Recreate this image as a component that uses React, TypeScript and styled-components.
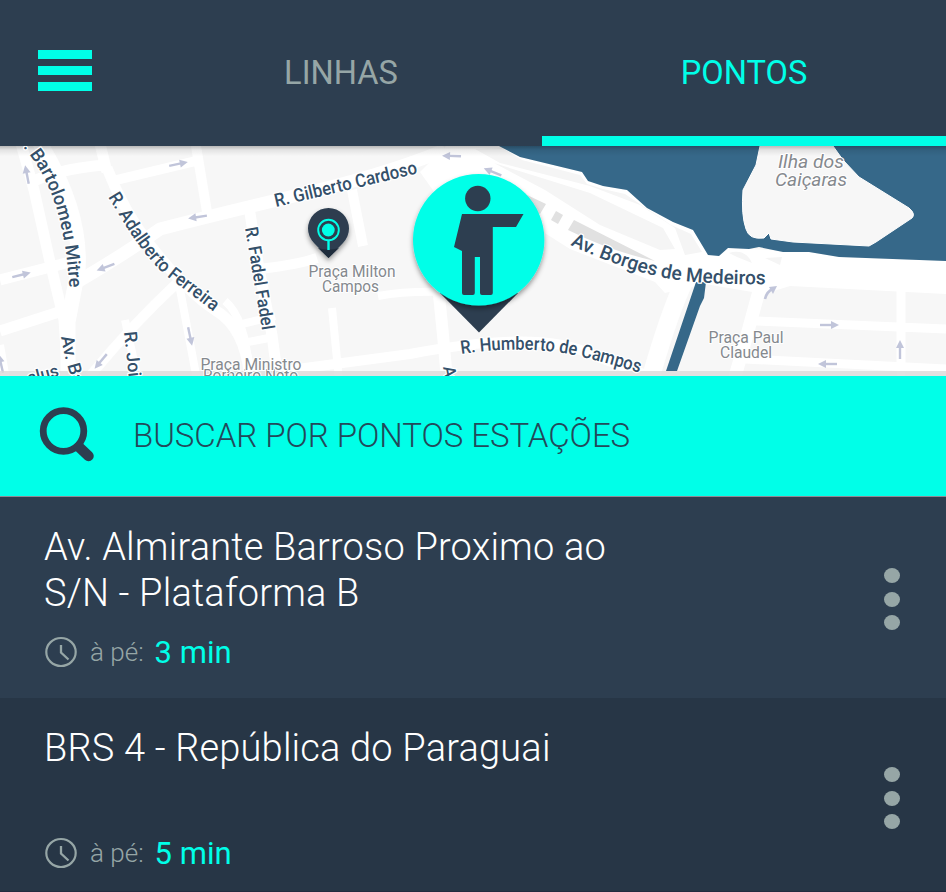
import React from "react";
import styled, { createGlobalStyle } from "styled-components";

const CYAN = "#00ffe8";
const NAVY = "#2d3e50";
const MUTED = "#96a6a6";

const GlobalStyle = createGlobalStyle`
  * { box-sizing: border-box; }
  body { margin: 0; background: ${NAVY}; font-family: Roboto, "Liberation Sans", sans-serif; }
  button { font: inherit; border: 0; padding: 0; background: none; cursor: pointer; }
`;

const Screen = styled.div`
  width: 946px;
  height: 892px;
  overflow: hidden;
  display: flex;
  flex-direction: column;
  background: ${NAVY};
`;

const TopBar = styled.header`
  height: 146px;
  flex: none;
  display: grid;
  grid-template-columns: 140px 402px 404px;
  background: ${NAVY};
`;

const MenuButton = styled.button`
  display: flex;
  flex-direction: column;
  gap: 7px;
  padding: 50px 0 0 38px;
`;

const MenuBar = styled.span`
  width: 54px;
  height: 9px;
  background: ${CYAN};
`;

const Tab = styled.button<{ $active?: boolean }>`
  display: flex;
  align-items: center;
  justify-content: center;
  padding-top: ${(p) => (p.$active ? 10 : 0)}px;
  padding-bottom: ${(p) => (p.$active ? 0 : 1)}px;
  border-bottom: ${(p) => (p.$active ? `10px solid ${CYAN}` : "0")};
  color: ${(p) => (p.$active ? CYAN : MUTED)};
  font-size: 32.6px;
  line-height: 38px;
`;

const MapPanel = styled.section`
  height: 230px;
  flex: none;
  background: #f7f7f7;
`;

const MapDrawing = styled.svg`
  display: block;
  width: 946px;
  height: 230px;
`;

const SearchBar = styled.div`
  height: 121px;
  flex: none;
  display: flex;
  align-items: center;
  padding: 0 0 0 38px;
  gap: 38px;
  background: ${CYAN};
  border-bottom: 1px solid #8c8b94;

  svg {
    margin-bottom: 4px;
  }
`;

const SearchLabel = styled.span`
  color: #23495a;
  font-size: 33px;
  font-weight: 300;
  line-height: 40px;
  letter-spacing: -0.05px;
  white-space: nowrap;
`;

const StopRow = styled.article<{ $dark?: boolean }>`
  height: ${(p) => (p.$dark ? 194 : 201)}px;
  flex: none;
  display: flex;
  justify-content: space-between;
  padding: 26px 46px 0 44px;
  background: ${(p) => (p.$dark ? "#273646" : NAVY)};
  border-bottom: ${(p) => (p.$dark ? "1px solid #232b40" : "0")};
`;

const StopInfo = styled.div`
  width: 600px;
`;

const StopName = styled.h2`
  height: 92px;
  margin: 0;
  padding-top: 1px;
  color: #fff;
  font-size: 38px;
  font-weight: 300;
  line-height: 46px;
  letter-spacing: 0.18px;
  white-space: pre-line;
`;

const WalkTime = styled.div`
  display: flex;
  align-items: center;
  height: 40px;
  margin-top: 17px;
`;

const WalkLabel = styled.span`
  margin: 0 11px 0 13px;
  color: ${MUTED};
  font-size: 26px;
  font-weight: 300;
`;

const Minutes = styled.span`
  color: ${CYAN};
  font-size: 31px;
`;

const MoreButton = styled.button<{ $dark?: boolean }>`
  height: 62px;
  margin-top: ${(p) => (p.$dark ? 43 : 45)}px;
  display: flex;
  flex-direction: column;
  justify-content: space-between;
`;

const Dot = styled.span`
  width: 16px;
  height: 15px;
  border-radius: 50%;
  background: ${MUTED};
`;

const StreetText = styled.text`
  font-family: Roboto, sans-serif;
  font-weight: 500;
  fill: #34506a;
  stroke: #fff;
  stroke-width: 2.5px;
  stroke-linejoin: round;
  paint-order: stroke;
`;

const PlaceText = styled.text<{ $italic?: boolean }>`
  font-family: Roboto, sans-serif;
  font-size: ${(p) => (p.$italic ? 18.5 : 16)}px;
  font-style: ${(p) => (p.$italic ? "italic" : "normal")};
  text-anchor: middle;
  fill: #85898e;
  stroke: #fff;
  stroke-width: 2px;
  stroke-linejoin: round;
  paint-order: stroke;
`;

interface Street { id: string; d: string; label: string; size: number; length?: number }

const streets: Street[] = [
  { id: "mitre", d: "M23,147 C48,174 69,222 70,310", label: ". Bartolomeu Mitre", size: 18.5, length: 151 },
  { id: "ferreira", d: "M108,197 C128,229 148,266 180,286 Q196,298 230,324", label: "R. Adalberto Ferreira", size: 18.5, length: 158 },
  { id: "cardoso", d: "M276,207 Q340,192 440,168", label: "R. Gilberto Cardoso", size: 18.5, length: 146 },
  { id: "fadel", d: "M245,228 L265,348", label: "R. Fadel Fadel", size: 18, length: 104 },
  { id: "borges", d: "M570,245 Q620,268 660,277 T790,284", label: "Av. Borges de Medeiros", size: 19.5, length: 202 },
  { id: "humberto", d: "M461,354 Q530,344 582,357 T660,380", label: "R. Humberto de Campos", size: 18.5, length: 181 },
  { id: "avba", d: "M61,337 Q65,362 78,400", label: "Av. Ba", size: 18 },
  { id: "joi", d: "M124,332 L131,400", label: "R. Join", size: 18 },
];

const roads: Array<[string, number]> = [
  ["M20,140 L34,190 L50,262 L64,320 L68,380", 11],
  ["M38,140 Q82,210 78,270 L68,322 V380", 15],
  ["M32,182 Q55,170 103,165 M99,140 L107,172", 11],
  ["M107,168 Q124,212 150,245 Q185,290 215,310 Q246,328 250,380", 11],
  ["M108,182 L200,160 M195,140 L207,212", 10],
  ["M72,285 Q125,254 160,229 Q218,214 290,197 Q385,175 445,150", 13],
  ["M0,280 L70,262 M0,331 L62,311", 11],
  ["M176,284 Q132,325 90,376", 10],
  ["M179,284 L197,380 M125,320 L138,380 M0,345 L6,380", 8],
  ["M249,207 L258,263 L272,335 L278,380", 11],
  ["M225,301 Q245,318 249,370 M238,325 L275,316 M248,342 L274,337", 8],
  ["M260,269 Q300,264 317,258 M352,190 L363,246", 10],
  ["M332,308 L339,380 M378,296 Q405,291 443,292", 8],
  ["M438,285 L443,335 L447,380", 12],
  ["M260,374 L410,354 Q540,329 590,354 L665,382", 10],
  ["M685,280 Q670,310 650,380", 18],
  ["M762,280 L747,335 L734,380", 13],
  ["M756,321 L946,329 M745,359 L946,369 M901,280 V376", 9],
];

const arrows: Array<[number, number, number]> = [
  [27, 175, -101], [178, 164, -12], [198, 217, 171], [21, 275, -14], [106, 267, 159],
  [190, 336, 78], [101, 361, 130], [1, 364, -103], [452, 156, 182], [493, 172, 202],
  [829, 325, 0], [828, 364, 180], [900, 350, -90],
];

function StreetMap() {
  return (
    <MapDrawing viewBox="0 146 946 230">
      <defs>
        <linearGradient id="topShade" x1="0" y1="0" x2="0" y2="1">
          <stop offset="0" stopColor="#000" stopOpacity="0.26" />
          <stop offset="0.4" stopColor="#000" stopOpacity="0.08" />
          <stop offset="1" stopColor="#000" stopOpacity="0" />
        </linearGradient>
        <filter id="pinShadow" x="-30%" y="-30%" width="160%" height="160%">
          <feDropShadow dx="0" dy="3" stdDeviation="2.5" floodColor="#000" floodOpacity="0.4" />
        </filter>
        {streets.map((s) => <path key={s.id} id={s.id} d={s.d} />)}
      </defs>

      <g fill="none" stroke="#fff" strokeLinejoin="round">
        {roads.map(([d, w]) => <path key={d} d={d} strokeWidth={w} />)}
      </g>

      {/* Lakeside avenue */}
      <path fill="#fff" d="M420,172 L446,146 H503 L520,157 L582,172 L603,186 L627,190 L673,222 L693,230 L708,255 L728,248 L809,252 L839,257 L946,261 V294 L790,286 L764,294 L705,284 L665,293 L655,282 L570,249 L540,230 L500,200 H440Z" />
      <path fill="#f5f5f5" d="M475,149 L502,148 L522,160 L580,175 L587,184 L603,189 L625,194 L671,225 L691,234 L702,252 L685,255 L675,228 L640,205 L590,186 L500,163Z M494,163 L590,193 L663,228 L675,249 L660,250 L600,225 L545,190Z" />
      <path fill="#e1e1e1" d="M525,194 L546,204 L540,214 L520,204Z M556,211 L563,215 L558,224 L551,220Z M574,220 L655,261 Q610,251 568,230Z" />
      <path fill="#f5f5f5" d="M729,253 Q745,248 752,263 L737,257Z M765,258 L782,257 L780,265Z" />

      {/* Water and island */}
      <path fill="#366889" d="M499,146 L520,157 L582,172 L588,181 L603,186 L627,190 L647,208 L673,222 L693,230 L708,255 L719,256 L728,248 L749,249 L759,247 L783,252 L809,252 L839,257 L946,261 V146Z" />
      <path fill="#366889" d="M696,282 H706 L704,298 L700,306 L677,371 H666Z" />
      <path fill="#f7f7f7" stroke="#fff" strokeWidth="1" d="M760,146 L756,165 L743,190 Q741,215 746,229 Q749,240 764,238 L769,233 L771,239 L793,242 L869,246 L876,242 L912,218 Q916,214 909,208 L859,177 L843,160 L833,146Z" />

      <g fill="#c1c5da" stroke="#c1c5da">
        {arrows.map(([x, y, r]) => (
          <g key={`${x}-${y}`} transform={`translate(${x} ${y}) rotate(${r})`}>
            <path strokeWidth="2.4" d="M-9,0 H3" />
            <path stroke="none" d="M2,-4 L10,0 L2,4Z" />
          </g>
        ))}
        <path fill="none" strokeWidth="2.6" d="M765,299 Q767,291 773,289" />
        <path stroke="none" d="M769,287 L777,286 L773,294Z" />
      </g>

      <rect x="0" y="146" width="946" height="10" fill="url(#topShade)" />
      <rect x="0" y="371" width="946" height="5" fill="#dcd9d9" opacity="0.8" />

      {streets.map((s) => (
        <StreetText key={s.id} fontSize={s.size}>
          <textPath href={`#${s.id}`} textLength={s.length} lengthAdjust="spacingAndGlyphs">{s.label}</textPath>
        </StreetText>
      ))}
      <StreetText fontSize="17" transform="translate(29 384) rotate(-15)">alus</StreetText>
      <StreetText fontSize="17" transform="translate(443 367) rotate(80)">Av</StreetText>

      <PlaceText x="352" y="276.5" textLength="87" lengthAdjust="spacingAndGlyphs">Praça Milton</PlaceText>
      <PlaceText x="350.5" y="292" textLength="57" lengthAdjust="spacingAndGlyphs">Campos</PlaceText>
      <PlaceText x="250.5" y="380.5" textLength="95" lengthAdjust="spacingAndGlyphs">Romeiro Neto</PlaceText>
      <PlaceText x="251" y="370" textLength="101" lengthAdjust="spacingAndGlyphs">Praça Ministro</PlaceText>
      <PlaceText x="746" y="343" textLength="75" lengthAdjust="spacingAndGlyphs">Praça Paul</PlaceText>
      <PlaceText x="746" y="358" textLength="52" lengthAdjust="spacingAndGlyphs">Claudel</PlaceText>
      <PlaceText $italic x="811" y="167.5" textLength="66" lengthAdjust="spacingAndGlyphs">Ilha dos</PlaceText>
      <PlaceText $italic x="811" y="186" textLength="72" lengthAdjust="spacingAndGlyphs">Caiçaras</PlaceText>

      {/* Secondary stop pin */}
      <g>
        <path filter="url(#pinShadow)" fill={NAVY} d="M328.5,258 L314,243 A20.5,20.5 0 1 1 343,243Z" />
        <path fill="#1f2c3c" d="M318,248 Q328.5,251 339,248 L328.5,258Z" />
        <circle cx="328.5" cy="230" r="10.3" fill="none" stroke={CYAN} strokeWidth="1.9" />
        <circle cx="328.3" cy="230" r="6.4" fill={CYAN} />
        <path stroke={CYAN} strokeWidth="2.4" d="M328.5,240 V250" />
      </g>

      {/* Current stop pin */}
      <g>
        <path fill={NAVY} d="M440,293 H518 L479,332.5Z" />
        <circle filter="url(#pinShadow)" cx="478.7" cy="239.8" r="65.7" fill={CYAN} />
        <g fill={NAVY}>
          <circle cx="477.8" cy="198.5" r="12.7" />
          <path d="M462,214 H523.5 L516,227 H492.8 V293 Q492.8,295 490.8,295 H482 Q480,295 480,293 V257 H474.8 V293 Q474.8,295 472.8,295 H464 Q462,295 462,293 V251 L454,247Z" />
        </g>
      </g>
    </MapDrawing>
  );
}

function SearchIcon() {
  return (
    <svg width="57" height="56" viewBox="0 0 57 56" fill="none" stroke={NAVY}>
      <circle cx="25.5" cy="25" r="20.3" strokeWidth="6.8" />
      <path d="M41,41 L50.5,50" strokeWidth="10.5" strokeLinecap="round" />
    </svg>
  );
}

function ClockIcon() {
  return (
    <svg width="33" height="32" viewBox="0 0 33 32" fill="none" stroke={MUTED}>
      <ellipse cx="17" cy="16" rx="14.7" ry="14" strokeWidth="2.2" />
      <path d="M17,9 V16.5 L24.5,23.5" strokeWidth="2.3" />
    </svg>
  );
}

interface StopProps { name: string; minutes: string; dark?: boolean }

function Stop({ name, minutes, dark }: StopProps) {
  return (
    <StopRow $dark={dark}>
      <StopInfo>
        <StopName>{name}</StopName>
        <WalkTime>
          <ClockIcon />
          <WalkLabel>à pé:</WalkLabel>
          <Minutes>{minutes}</Minutes>
        </WalkTime>
      </StopInfo>
      <MoreButton $dark={dark} aria-label="Mais opções">
        <Dot /><Dot /><Dot />
      </MoreButton>
    </StopRow>
  );
}

export default function App() {
  return (
    <>
      <GlobalStyle />
      <Screen>
        <TopBar>
          <MenuButton aria-label="Menu">
            <MenuBar /><MenuBar /><MenuBar />
          </MenuButton>
          <Tab>LINHAS</Tab>
          <Tab $active>PONTOS</Tab>
        </TopBar>
        <MapPanel><StreetMap /></MapPanel>
        <SearchBar>
          <SearchIcon />
          <SearchLabel>BUSCAR POR PONTOS ESTAÇÕES</SearchLabel>
        </SearchBar>
        <Stop name={"Av. Almirante Barroso Proximo ao\nS/N - Plataforma B"} minutes="3 min" />
        <Stop dark name="BRS 4 - República do Paraguai" minutes="5 min" />
      </Screen>
    </>
  );
}
